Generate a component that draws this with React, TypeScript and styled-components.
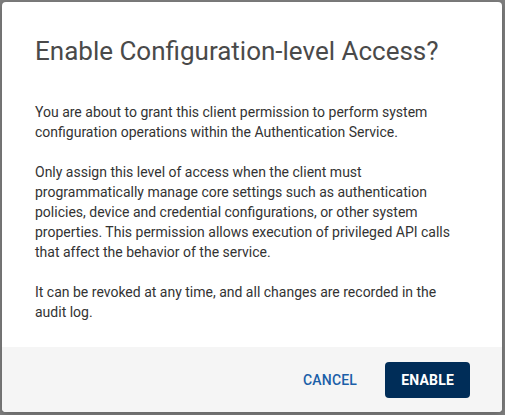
import React from "react";
import styled, { createGlobalStyle } from "styled-components";

const GlobalStyle = createGlobalStyle`
    html, body {
        margin: 0;
        padding: 0;
        height: 100%;
        background: #808080;
        font-family: Roboto, "Liberation Sans", Arial, sans-serif;
    }
    #root {
        height: 100%;
    }
`;

const Overlay = styled.div`
    box-sizing: border-box;
    width: 505px;
    height: 415px;
    padding: 2px 3px 3px 2px;
    background: #808080;
`;

const Dialog = styled.div`
    display: flex;
    flex-direction: column;
    height: 100%;
    background: #fff;
    border-radius: 4px;
    overflow: hidden;
    box-shadow: 0 2px 8px rgba(0, 0, 0, 0.25);
`;

const Content = styled.div`
    flex: 1;
    padding: 33px 32px 0 33px;
`;

const Title = styled.h2`
    margin: 0 0 35px;
    font-size: 26px;
    line-height: 32px;
    font-weight: 400;
    color: #4a4a4a;
`;

const Paragraph = styled.p`
    margin: 0 0 20px;
    font-size: 14px;
    line-height: 20px;
    color: #333;
`;

const Footer = styled.div`
    display: flex;
    justify-content: flex-end;
    align-items: center;
    gap: 12px;
    height: 65px;
    padding: 0 32px;
    background: #f5f5f5;
`;

interface ButtonProps {
    $primary?: boolean;
}

const Button = styled.button<ButtonProps>`
    height: 36px;
    padding: 0 16px;
    border: none;
    border-radius: 4px;
    font-family: Roboto, "Liberation Sans", Arial, sans-serif;
    font-size: 14px;
    font-weight: ${(p) => (p.$primary ? 700 : 500)};
    text-transform: uppercase;
    letter-spacing: 0.2px;
    cursor: pointer;
    background: ${(p) => (p.$primary ? "#002d58" : "transparent")};
    color: ${(p) => (p.$primary ? "#fff" : "#1b5fa8")};
`;

export default function App() {
    return (
        <>
            <GlobalStyle />
            <Overlay>
                <Dialog>
                    <Content>
                        <Title>Enable Configuration-level Access?</Title>
                        <Paragraph>
                            You are about to grant this client permission to perform system
                            configuration operations within the Authentication Service.
                        </Paragraph>
                        <Paragraph>
                            Only assign this level of access when the client must
                            programmatically manage core settings such as authentication
                            policies, device and credential configurations, or other system
                            properties. This permission allows execution of privileged API
                            calls that affect the behavior of the service.
                        </Paragraph>
                        <Paragraph>
                            It can be revoked at any time, and all changes are recorded in
                            the audit log.
                        </Paragraph>
                    </Content>
                    <Footer>
                        <Button>Cancel</Button>
                        <Button $primary>Enable</Button>
                    </Footer>
                </Dialog>
            </Overlay>
        </>
    );
}
